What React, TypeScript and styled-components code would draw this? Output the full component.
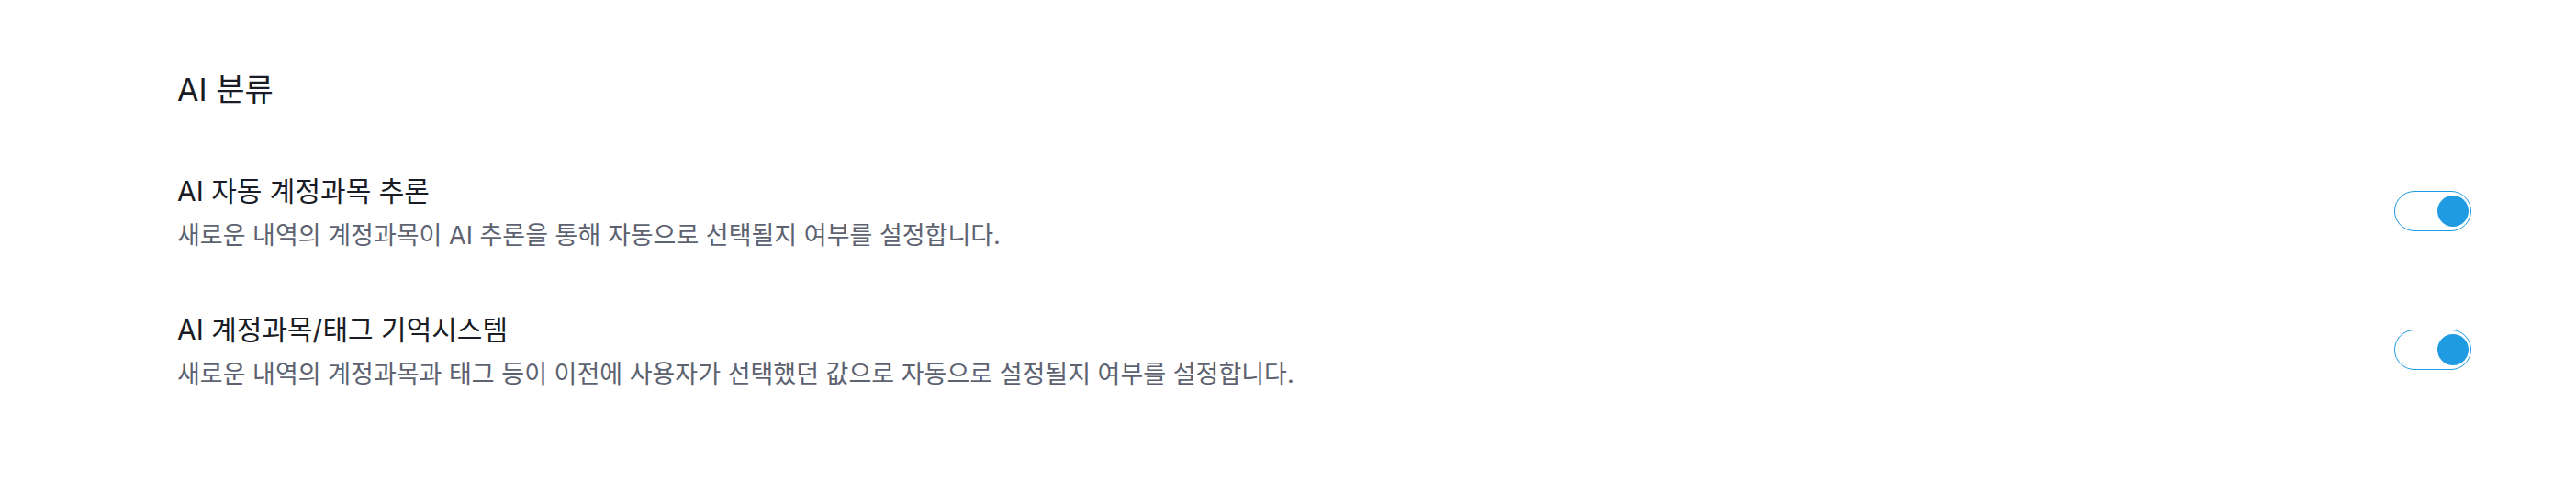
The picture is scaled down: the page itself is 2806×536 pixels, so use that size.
import React, { useState } from "react";
import styled, { createGlobalStyle } from "styled-components";

const GlobalStyle = createGlobalStyle`
  html, body {
    margin: 0;
    padding: 0;
    background: #ffffff;
  }
  body {
    font-family: "Inter", "Noto Sans CJK KR", "Noto Sans", sans-serif;
    -webkit-font-smoothing: antialiased;
  }
  * { box-sizing: border-box; }
`;

const Page = styled.main`
  width: 2806px;
  min-height: 536px;
  padding: 75px 114px 0 193px;
`;

const Section = styled.section`
  display: flex;
  flex-direction: column;
`;

const SectionHeader = styled.header`
  padding-bottom: 31px;
  border-bottom: 1px solid #eeeff1;
`;

const SectionTitle = styled.h2`
  margin: 0;
  font-size: 34px;
  line-height: 46px;
  font-weight: 400;
  color: #191c24;
`;

const SettingList = styled.div`
  display: flex;
  flex-direction: column;
  padding-top: 3px;
`;

const SettingRow = styled.div`
  display: flex;
  align-items: center;
  justify-content: space-between;
  gap: 40px;
  padding: 30px 0 29px;
`;

const SettingText = styled.div`
  display: flex;
  flex-direction: column;
  gap: 6px;
`;

const SettingTitle = styled.div`
  font-size: 30px;
  line-height: 44px;
  font-weight: 400;
  color: #191c24;
`;

const SettingDesc = styled.div`
  font-size: 27px;
  line-height: 42px;
  font-weight: 400;
  color: #5d6271;
`;

const Switch = styled.button<{ $on: boolean }>`
  flex: none;
  width: 84px;
  height: 44px;
  margin-bottom: 5px;
  padding: 0 2.5px;
  border: 1.5px solid ${(p) => (p.$on ? "#1f9be1" : "#c9ced6")};
  border-radius: 22px;
  background: #ffffff;
  display: flex;
  align-items: center;
  justify-content: ${(p) => (p.$on ? "flex-end" : "flex-start")};
  cursor: pointer;
`;

const Knob = styled.span<{ $on: boolean }>`
  display: block;
  width: 34px;
  height: 34px;
  border-radius: 50%;
  background: ${(p) => (p.$on ? "#1f9be1" : "#c9ced6")};
`;

type Setting = { id: string; title: string; desc: string };

const settings: Setting[] = [
  {
    id: "infer",
    title: "AI 자동 계정과목 추론",
    desc: "새로운 내역의 계정과목이 AI 추론을 통해 자동으로 선택될지 여부를 설정합니다.",
  },
  {
    id: "memory",
    title: "AI 계정과목/태그 기억시스템",
    desc: "새로운 내역의 계정과목과 태그 등이 이전에 사용자가 선택했던 값으로 자동으로 설정될지 여부를 설정합니다.",
  },
];

export default function App() {
  const [state, setState] = useState<Record<string, boolean>>({ infer: true, memory: true });
  return (
    <>
      <GlobalStyle />
      <Page>
        <Section>
          <SectionHeader>
            <SectionTitle>AI 분류</SectionTitle>
          </SectionHeader>
          <SettingList>
            {settings.map((s) => (
              <SettingRow key={s.id}>
                <SettingText>
                  <SettingTitle>{s.title}</SettingTitle>
                  <SettingDesc>{s.desc}</SettingDesc>
                </SettingText>
                <Switch
                  type="button"
                  role="switch"
                  aria-checked={state[s.id]}
                  aria-label={s.title}
                  $on={state[s.id]}
                  onClick={() => setState((st) => ({ ...st, [s.id]: !st[s.id] }))}
                >
                  <Knob $on={state[s.id]} />
                </Switch>
              </SettingRow>
            ))}
          </SettingList>
        </Section>
      </Page>
    </>
  );
}
